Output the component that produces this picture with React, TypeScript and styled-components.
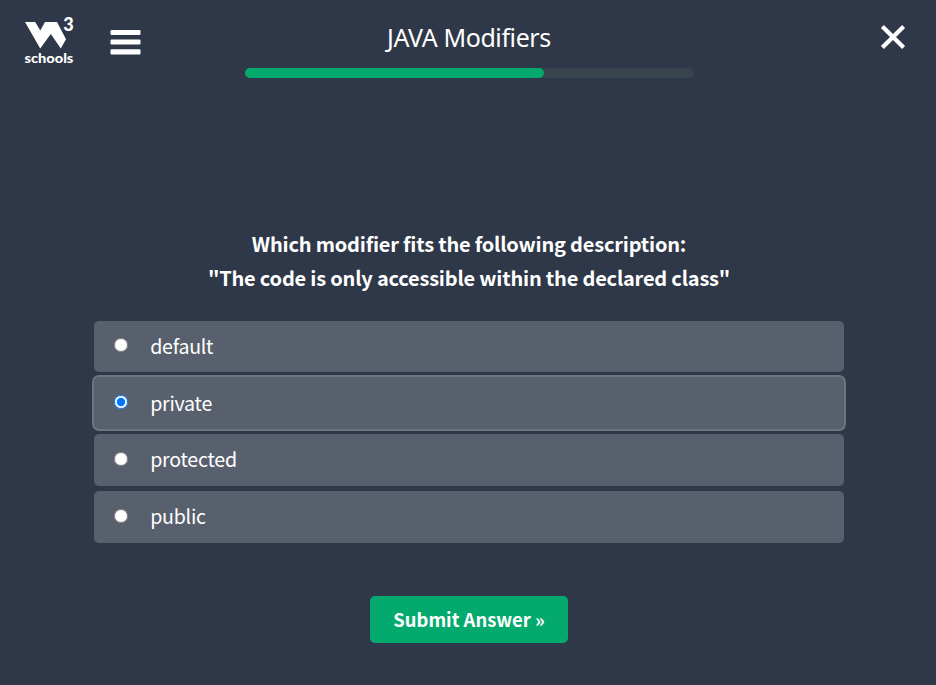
import React, { useState } from "react";
import styled, { createGlobalStyle } from "styled-components";

const GlobalStyle = createGlobalStyle`
  * { box-sizing: border-box; }
  body { margin: 0; background: #2f3848; }
`;

const sourceSans = `"Noto Sans CJK SC", "Noto Sans", sans-serif`;

const Page = styled.div`
  min-height: 685px;
  color: #fff;
  font-family: ${sourceSans};
`;

const Header = styled.header`
  display: grid;
  grid-template-columns: 245px 449px 1fr;
  height: 84px;
`;

const Brand = styled.div`
  display: flex;
  align-items: flex-start;
  padding: 14px 0 0 20px;
`;

const IconButton = styled.button`
  display: block;
  border: 0;
  padding: 0;
  background: none;
  color: inherit;
  line-height: 0;
  cursor: pointer;
`;

const MenuButton = styled(IconButton)`
  margin: 15px 0 0 30px;
`;

const CloseButton = styled(IconButton)`
  justify-self: end;
  align-self: start;
  margin: 22px 28px 0 0;
`;

const Progress = styled.div`
  display: flex;
  flex-direction: column;
`;

const Title = styled.div`
  height: 68px;
  padding: 20px 1px 0 0;
  font-family: "Noto Sans", sans-serif;
  font-size: 25px;
  line-height: 35px;
  letter-spacing: -0.4px;
  text-align: center;
  white-space: nowrap;
`;

const Track = styled.div`
  height: 10px;
  border-radius: 5px;
  background: #38444d;
`;

const Fill = styled.div`
  height: 100%;
  border-radius: 5px;
  background: #04aa6d;
`;

const Quiz = styled.form`
  display: flex;
  flex-direction: column;
  align-items: center;
  width: 750px;
  margin: 143px 0 0 94px;
`;

const Question = styled.h1`
  margin: 0 0 25.6px;
  font-size: 20px;
  font-weight: 700;
  line-height: 34px;
  letter-spacing: -0.2px;
  text-align: center;
  white-space: nowrap;
`;

const Options = styled.div`
  display: flex;
  flex-direction: column;
  gap: 4.95px;
  width: 100%;
`;

const Option = styled.label<{ $selected: boolean }>`
  display: flex;
  align-items: center;
  height: 51.8px;
  padding: 0 0 1.2px 20.4px;
  border-radius: 5px;
  background: #59606d;
  box-shadow: ${(p) => (p.$selected ? "0 0 0 2px #6c747f" : "none")};
  font-size: 19.6px;
  line-height: 30px;
  letter-spacing: -0.25px;
  cursor: pointer;
`;

const Radio = styled.input`
  width: 14px;
  height: 14px;
  margin: 0 21.8px 1px 0;
`;

const Submit = styled.button`
  width: 198px;
  height: 47px;
  margin-top: 53.4px;
  padding: 0;
  border: 0;
  border-radius: 5px;
  background: #04aa6d;
  color: #fff;
  font: 700 18.4px/47px ${sourceSans};
  cursor: pointer;
`;

const LogoText = styled.text`
  font-family: Lato, sans-serif;
  font-weight: 900;
`;

const Logo = () => (
  <svg width="60" height="54" viewBox="20 14 60 54" fill="#fff">
    <path d="M25 22H35.2L40.3 30.4L45 22H57L66 39.2L60.8 48.6L50.8 34L40.2 48.6Z" />
    <LogoText x="63.2" y="31" fontSize="18">3</LogoText>
    <LogoText x="24.5" y="63" fontSize="13.8" textLength="48.8" lengthAdjust="spacingAndGlyphs">schools</LogoText>
  </svg>
);

const MenuIcon = () => (
  <svg width="31" height="26" viewBox="0 0 31 26" fill="#fff">
    <rect x="0.5" y="1" width="30" height="5" rx="1.2" />
    <rect x="0.5" y="10.5" width="30" height="5" rx="1.2" />
    <rect x="0.5" y="20.2" width="30" height="5.2" rx="1.2" />
  </svg>
);

const CloseIcon = () => (
  <svg width="30" height="30" viewBox="0 0 30 30" stroke="#fff" strokeWidth="4.2">
    <path d="M4.4 4.4L25.6 25.6M25.6 4.4L4.4 25.6" />
  </svg>
);

const choices = ["default", "private", "protected", "public"];

export default function App() {
  const [selected, setSelected] = useState("private");
  const progress = 66.6;

  return (
    <>
      <GlobalStyle />
      <Page>
        <Header>
          <Brand>
            <Logo />
            <MenuButton aria-label="Menu"><MenuIcon /></MenuButton>
          </Brand>
          <Progress>
            <Title>JAVA Modifiers</Title>
            <Track><Fill style={{ width: `${progress}%` }} /></Track>
          </Progress>
          <CloseButton aria-label="Close"><CloseIcon /></CloseButton>
        </Header>
        <Quiz onSubmit={(e) => e.preventDefault()}>
          <Question>
            Which modifier fits the following description:
            <br />
            "The code is only accessible within the declared class"
          </Question>
          <Options>
            {choices.map((choice) => (
              <Option key={choice} $selected={choice === selected}>
                <Radio
                  type="radio"
                  name="modifier"
                  checked={choice === selected}
                  onChange={() => setSelected(choice)}
                />
                {choice}
              </Option>
            ))}
          </Options>
          <Submit type="submit">Submit Answer »</Submit>
        </Quiz>
      </Page>
    </>
  );
}
